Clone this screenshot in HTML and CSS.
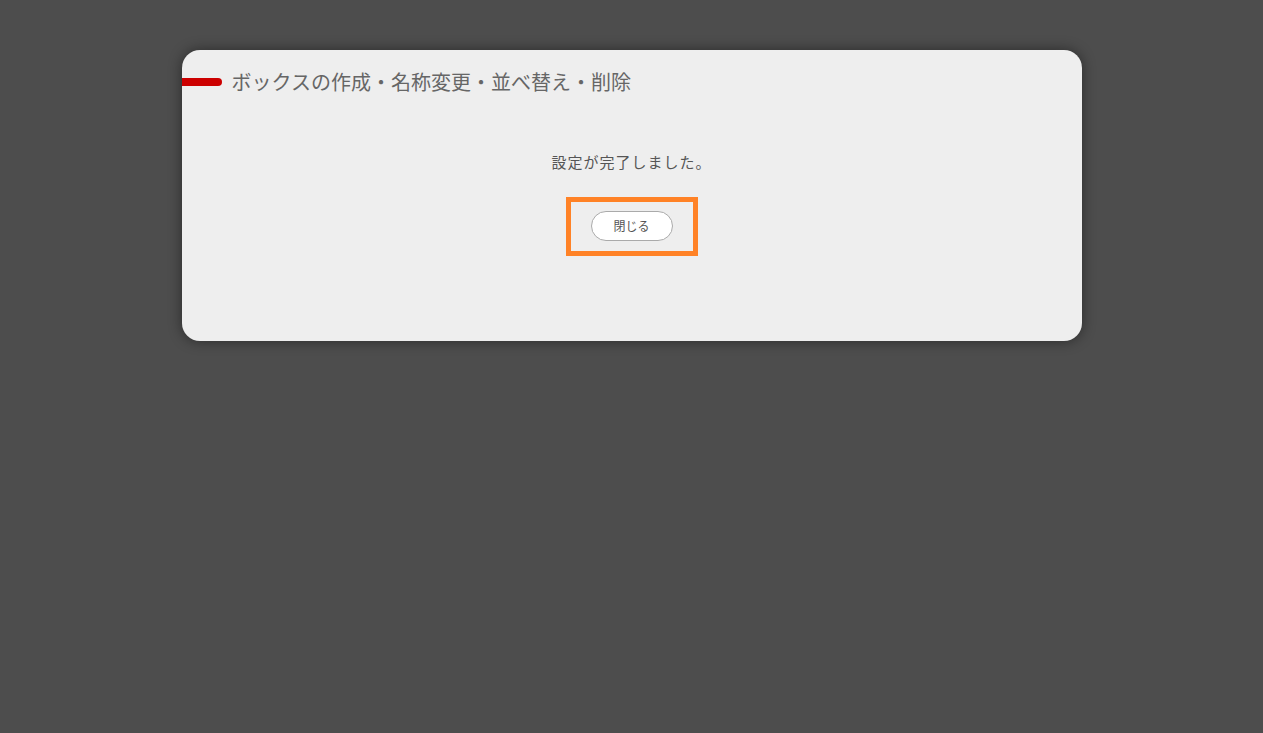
FILE: index.html
```html
<!DOCTYPE html>
<html lang="ja">
<head>
<meta charset="utf-8">
<title>ボックスの作成・名称変更・並べ替え・削除</title>
<link rel="stylesheet" href="styles.css">
</head>
<body>
<div class="dialog">
  <div class="dialog-header">
    <span class="dialog-mark"></span>
    <h1 class="dialog-title">ボックスの作成・名称変更・並べ替え・削除</h1>
  </div>
  <p class="dialog-message">設定が完了しました。</p>
  <div class="dialog-actions">
    <div class="focus-ring">
      <button class="btn-close" type="button">閉じる</button>
    </div>
  </div>
</div>
</body>
</html>
```
FILE: styles.css
```css
html, body {
  margin: 0;
  padding: 0;
  background: #4d4d4d;
  font-family: "Noto Sans CJK JP", "Noto Sans", sans-serif;
}
body {
  padding-top: 50px;
  height: 733px;
  box-sizing: border-box;
}
.dialog {
  width: 900px;
  height: 291px;
  margin: 0 auto;
  box-sizing: border-box;
  background: #eeeeee;
  border-radius: 18px;
  box-shadow: 0 0 14px rgba(0, 0, 0, 0.45);
  padding-top: 18px;
  overflow: hidden;
}
.dialog-header {
  display: flex;
  align-items: center;
  height: 28px;
  gap: 10px;
}
.dialog-mark {
  width: 40px;
  height: 8px;
  background: #cc0000;
  border-radius: 0 4px 4px 0;
  flex: none;
}
.dialog-title {
  margin: 0;
  font-size: 20px;
  font-weight: normal;
  color: #666666;
  line-height: 28px;
}
.dialog-message {
  margin: 56px 0 0;
  text-align: center;
  font-size: 15px;
  line-height: 20px;
  letter-spacing: 1px;
  color: #555555;
}
.dialog-actions {
  display: flex;
  justify-content: center;
  margin-top: 25px;
}
.focus-ring {
  border: 5px solid #ff8226;
  padding: 9px 20px 10px 20px;
  display: flex;
}
.btn-close {
  width: 82px;
  height: 30px;
  border: 1px solid #aaaaaa;
  border-radius: 15px;
  background: #ffffff;
  color: #555555;
  font-family: "Noto Sans CJK JP", "Noto Sans", sans-serif;
  font-size: 12px;
  padding: 0 0 1px;
  cursor: pointer;
}
```
